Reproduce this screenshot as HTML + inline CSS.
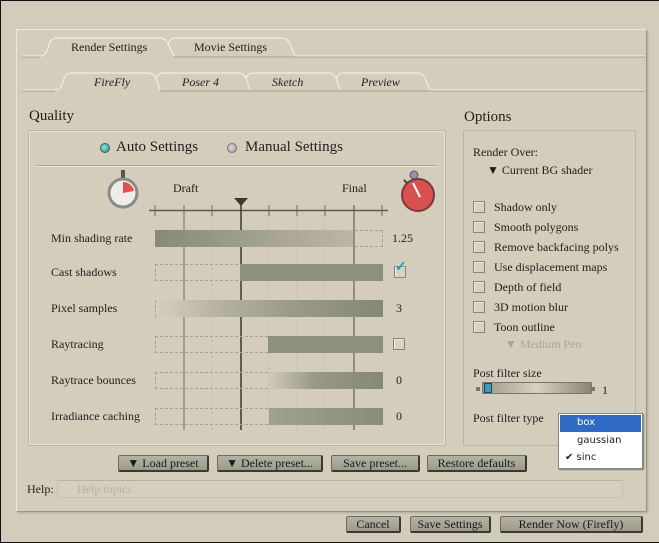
<!DOCTYPE html>
<html><head><meta charset="utf-8"><style>
*{margin:0;padding:0;box-sizing:border-box}
body{width:659px;height:543px;overflow:hidden;background:#d4ccba;font-family:"Liberation Serif",serif;color:#1e1e1e;position:relative}
.a{position:absolute;white-space:nowrap}
.t{font-size:12px}
.btn{position:absolute;height:17px;background:linear-gradient(#b4b2a2,#9c9a8a);border:1px solid #6e6c60;border-right:2px solid #3a382f;border-bottom:2px solid #3a382f;font-size:12px;text-align:center;line-height:14px;color:#1a1a1a;border-radius:2px}
.cb{position:absolute;width:12px;height:12px;border:1px solid #8a8474;background:#d9d2c2;box-shadow:inset 1px 1px 0 #f0ebe0}
.bar{position:absolute;height:17px}
.dash{position:absolute;height:17px;border:1px dashed #a8a090}
</style></head><body>
<div class="a" style="left:0;top:0;width:659px;height:543px;border:1px solid #111;border-right:none"></div>
<div class="a" style="left:16px;top:29px;width:630px;height:482px;background:#d5cdbb;border-top:1px solid #eee8da;border-left:1px solid #eee8da;box-shadow:1px 1px 0 #9a937f,2px 2px 2px #b0a894"></div>
<svg class="a" style="left:0;top:0" width="659" height="543">
<g fill="none" stroke="#f2ede2" stroke-width="1.2">
<path d="M22 56 H40 Q46 56 48 48 L50 42 Q52 38 58 38 H160 Q165 38 168 44 L174 56"/>
<path d="M168 44 Q170 38 176 38 H282 Q287 38 290 44 L295 56 H645"/>
<path d="M22 90 H55 Q61 90 63 82 L65 76 Q67 73 73 73 H148 Q153 73 156 78 L160 90"/>
<path d="M156 78 Q158 73 164 73 H238 Q243 73 246 78 L250 90"/>
<path d="M246 78 Q248 73 254 73 H328 Q333 73 336 78 L340 90"/>
<path d="M336 78 Q338 73 344 73 H417 Q422 73 425 78 L430 90 H645"/>
</g>
<g fill="none" stroke="#a89f8c"><path d="M22 57 H40 M174 57 H645 M22 91 H55 M160 91 H645"/></g>
<rect x="28.5" y="130.5" width="417" height="315" fill="none" stroke="#bdb5a2"/>
<rect x="29.5" y="131.5" width="415" height="313" fill="none" stroke="#e6e0d2"/>
<rect x="463.5" y="130.5" width="172" height="315" fill="none" stroke="#bdb5a2"/>
<line x1="37" y1="165.5" x2="437" y2="165.5" stroke="#a9a18e"/>
<line x1="37" y1="166.5" x2="437" y2="166.5" stroke="#ebe5d8"/>
<line x1="149" y1="210.5" x2="388" y2="210.5" stroke="#5e5a50" stroke-width="1.5"/>
<g stroke="#6e6a5e"><path d="M184 205V430M212 205V216M269 205V216M297 205V216M325 205V216M382 205V216M155 205V216"/></g>
<g stroke="#c4bca9" stroke-dasharray="2 2"><path d="M212 216V430M269 216V430M297 216V430M325 216V430"/></g>
<path d="M241 205V430" stroke="#3a3830" stroke-width="1.5"/>
<path d="M354 205V430" stroke="#4e4b42"/>
<path d="M234 198H248L241 206Z" fill="#3a3830"/>
<g transform="translate(106,170)"><rect x="15" y="0" width="4" height="8" fill="#555"/><circle cx="17" cy="23" r="14" fill="#efede8" stroke="#8a8a8a" stroke-width="3"/><path d="M17 23V12A11 11 0 0 1 28 21Z" fill="#e05050"/></g>
<g transform="translate(398,170)"><circle cx="16" cy="5" r="4" fill="#8a98ac" stroke="#556"/><line x1="6" y1="10" x2="10" y2="14" stroke="#444" stroke-width="2"/><circle cx="20" cy="25" r="16" fill="#d85050" stroke="#7a3a3a" stroke-width="2"/><path d="M15 13L22 27" stroke="#fff" stroke-width="2"/></g>
</svg>
<div class="a" style="left:29px;top:108px;font-size:15px">Quality</div>
<div class="a" style="left:464px;top:109px;font-size:15px">Options</div>
<div class="a" style="left:100px;top:143px;width:10px;height:10px;border-radius:50%;background:radial-gradient(circle at 40% 40%,#7ed,#289);border:1px solid #555"></div>
<div class="a" style="left:116px;top:139px;font-size:15px">Auto Settings</div>
<div class="a" style="left:227px;top:143px;width:10px;height:10px;border-radius:50%;background:radial-gradient(circle at 40% 40%,#ddd,#999);border:1px solid #777"></div>
<div class="a" style="left:245px;top:139px;font-size:15px">Manual Settings</div>
<div class="a t" style="left:173px;top:181px">Draft</div>
<div class="a t" style="left:342px;top:181px">Final</div>
<div class="a t" style="left:51px;top:231px">Min shading rate</div>
<div class="a t" style="left:51px;top:265px">Cast shadows</div>
<div class="a t" style="left:51px;top:301px">Pixel samples</div>
<div class="a t" style="left:51px;top:337px">Raytracing</div>
<div class="a t" style="left:51px;top:373px">Raytrace bounces</div>
<div class="a t" style="left:51px;top:409px">Irradiance caching</div>
<div class="dash" style="left:155px;top:230px;width:228px"></div>
<div class="bar" style="left:155px;top:230px;width:198px;background:linear-gradient(90deg,#858a78,#9c9c8a 40%,#bcb6a4)"></div>
<div class="dash" style="left:155px;top:264px;width:228px"></div>
<div class="bar" style="left:240px;top:264px;width:143px;background:#8e907e"></div>
<div class="dash" style="left:155px;top:300px;width:228px"></div>
<div class="bar" style="left:156px;top:300px;width:227px;background:linear-gradient(90deg,#d6cebc,#b4b09e 30%,#9a9a88 60%,#858876)"></div>
<div class="dash" style="left:155px;top:336px;width:228px"></div>
<div class="bar" style="left:268px;top:336px;width:115px;background:#8e907e"></div>
<div class="dash" style="left:155px;top:372px;width:228px"></div>
<div class="bar" style="left:270px;top:372px;width:113px;background:linear-gradient(90deg,#d0c8b6,#989886 40%,#858876)"></div>
<div class="dash" style="left:155px;top:408px;width:228px"></div>
<div class="bar" style="left:269px;top:408px;width:114px;background:linear-gradient(90deg,#a0a090,#8a8c7a)"></div>
<div class="a t" style="left:392px;top:231px">1.25</div>
<div class="cb" style="left:394px;top:266px"></div><div class="a" style="left:395px;top:259px;color:#1ab;font-size:14px;font-weight:bold">✓</div>
<div class="a t" style="left:396px;top:301px">3</div>
<div class="cb" style="left:393px;top:338px"></div>
<div class="a t" style="left:396px;top:373px">0</div>
<div class="a t" style="left:396px;top:409px">0</div>
<div class="a t" style="left:473px;top:145px">Render Over:</div>
<div class="a t" style="left:487px;top:163px">▼ Current BG shader</div>
<div class="cb" style="left:473px;top:201px"></div><div class="a t" style="left:494px;top:200px">Shadow only</div>
<div class="cb" style="left:473px;top:221px"></div><div class="a t" style="left:494px;top:220px">Smooth polygons</div>
<div class="cb" style="left:473px;top:241px"></div><div class="a t" style="left:494px;top:240px">Remove backfacing polys</div>
<div class="cb" style="left:473px;top:261px"></div><div class="a t" style="left:494px;top:260px">Use displacement maps</div>
<div class="cb" style="left:473px;top:281px"></div><div class="a t" style="left:494px;top:280px">Depth of field</div>
<div class="cb" style="left:473px;top:301px"></div><div class="a t" style="left:494px;top:300px">3D motion blur</div>
<div class="cb" style="left:473px;top:321px"></div><div class="a t" style="left:494px;top:320px">Toon outline</div>
<div class="a t" style="left:505px;top:337px;color:#aaa494">▼ Medium Pen</div>
<div class="a t" style="left:473px;top:366px">Post filter size</div>
<div class="a" style="left:476px;top:387px;width:4px;height:4px;background:#678"></div>
<div class="a" style="left:482px;top:382px;width:110px;height:12px;background:linear-gradient(90deg,#a09a88,#d8d0be 50%,#8a8474);border:1px solid #777"></div>
<div class="a" style="left:484px;top:383px;width:8px;height:10px;background:#3a9ab8;border:1px solid #245"></div>
<div class="a" style="left:591px;top:387px;width:4px;height:4px;background:#678"></div>
<div class="a t" style="left:602px;top:383px">1</div>
<div class="a t" style="left:473px;top:411px">Post filter type</div>
<div class="a" style="left:558px;top:413px;width:85px;height:56px;background:#fff;border:1px solid #888;font-family:'DejaVu Sans','Liberation Sans',sans-serif;font-size:10px;box-shadow:1px 1px 1px #777">
<div style="margin:1px;height:17px;background:#316ac5;color:#fff;padding-left:17px;line-height:16px">box</div>
<div style="height:17px;padding-left:18px;line-height:16px">gaussian</div>
<div style="height:17px;padding-left:6px;line-height:16px">✔ sinc</div></div>
<div class="btn" style="left:118px;top:455px;width:91px">▼ Load preset</div>
<div class="btn" style="left:217px;top:455px;width:106px">▼ Delete preset...</div>
<div class="btn" style="left:331px;top:455px;width:89px">Save preset...</div>
<div class="btn" style="left:427px;top:455px;width:100px">Restore defaults</div>
<div class="a t" style="left:27px;top:482px">Help:</div>
<div class="a" style="left:57px;top:480px;width:566px;height:18px;border:1px solid #c8c0ad;border-top-color:#bab29f;background:#d6cfbd"></div>
<div class="a t" style="left:77px;top:482px;color:#b6af9c">Help topics</div>
<div class="btn" style="left:346px;top:516px;width:55px">Cancel</div>
<div class="btn" style="left:410px;top:516px;width:81px">Save Settings</div>
<div class="btn" style="left:500px;top:516px;width:143px">Render Now (Firefly)</div>
<div class="a" style="left:71px;top:40px;font-size:12px">Render Settings</div>
<div class="a" style="left:194px;top:40px;font-size:12px">Movie Settings</div>
<div class="a" style="left:94px;top:75px;font-size:12px;font-style:italic">FireFly</div>
<div class="a" style="left:182px;top:75px;font-size:12px;font-style:italic">Poser 4</div>
<div class="a" style="left:272px;top:75px;font-size:12px;font-style:italic">Sketch</div>
<div class="a" style="left:361px;top:75px;font-size:12px;font-style:italic">Preview</div>
</body></html>
